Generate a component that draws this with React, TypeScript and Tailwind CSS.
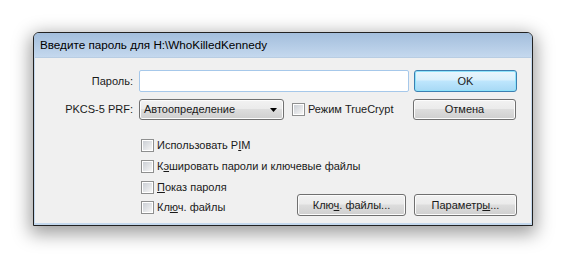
import React from "react";

function Check({ children }: { children: React.ReactNode }) {
  return (
    <div className="flex items-center">
      <div className="w-[13px] h-[13px] border border-[#8e8f8f] bg-white p-[1px] shrink-0">
        <div className="w-full h-full bg-gradient-to-br from-[#cbcfd5] to-[#f6f6f6]" />
      </div>
      <span className="ml-[3px] leading-[13px]">{children}</span>
    </div>
  );
}

function Btn({ children, w, primary }: { children: React.ReactNode; w: string; primary?: boolean }) {
  return (
    <div
      className={
        "h-[22px] rounded-[3px] border flex items-center justify-center " +
        w +
        (primary
          ? " border-[#3c7fb1] shadow-[inset_0_0_0_1px_#8fe3fb] bg-[linear-gradient(#eaf6fd_0%,#d9f0fc_45%,#bee6fd_50%,#a7d9f5_100%)]"
          : " border-[#707070] shadow-[inset_0_0_0_1px_#fcfcfc] bg-[linear-gradient(#f2f2f2_0%,#ebebeb_45%,#dddddd_50%,#cfcfcf_100%)]")
      }
    >
      <span className="leading-none">{children}</span>
    </div>
  );
}

export default function App() {
  return (
    <div
      className="w-[565px] h-[259px] bg-white pl-[33px] pt-[32px] text-[11px] text-[#1a1a1a]"
      style={{ fontFamily: '"Liberation Sans", "Noto Sans", sans-serif' }}
    >
      <div className="w-[500px] h-[194px] border border-[#222] rounded-t-[6px] shadow-[0_5px_18px_3px_rgba(0,0,0,0.38)] flex flex-col bg-[#c4d8ed] overflow-hidden">
        <div className="h-[24px] shrink-0 bg-[linear-gradient(#a3bedc,#c4d8ee)] flex items-center pl-[6px]">
          <span className="leading-none text-[11.7px] text-black">Введите пароль для H:\WhoKilledKennedy</span>
        </div>
        <div className="flex-1 mx-[1px] mb-[2px] bg-[#f0f0f0] border-t border-[#b8cde3] pt-[12px]">
          <div className="flex items-center h-[22px]">
            <div className="w-[98px] text-right">Пароль:</div>
            <div className="ml-[6px] w-[270px] h-[22px] bg-white border border-[#a6c8ea] rounded-[2px]" />
            <div className="ml-[5px]">
              <Btn w="w-[103px]" primary>
                OK
              </Btn>
            </div>
          </div>
          <div className="flex items-center h-[21px] mt-[7px]">
            <div className="w-[98px] text-right">PKCS-5 PRF:</div>
            <div className="ml-[6px] w-[145px] h-[21px] border border-[#707070] rounded-[3px] bg-[linear-gradient(#f2f2f2_0%,#ebebeb_45%,#dddddd_50%,#cfcfcf_100%)] shadow-[inset_0_0_0_1px_#fcfcfc] flex items-center pl-[4px] pr-[5px]">
              <span className="flex-1 leading-none">Автоопределение</span>
              <svg width="8" height="4" viewBox="0 0 8 4">
                <path d="M0 0H7L3.5 4Z" fill="#000" />
              </svg>
            </div>
            <div className="ml-[8px] w-[116px]">
              <Check>Режим TrueCrypt</Check>
            </div>
            <div className="ml-[5px] h-[21px]">
              <div className="h-[21px] w-[103px] rounded-[3px] border border-[#707070] shadow-[inset_0_0_0_1px_#fcfcfc] bg-[linear-gradient(#f2f2f2_0%,#ebebeb_45%,#dddddd_50%,#cfcfcf_100%)] flex items-center justify-center">
                <span className="leading-none">Отмена</span>
              </div>
            </div>
          </div>
          <div className="ml-[106px] mt-[15px] flex flex-col">
            <div className="h-[21px] pt-[4px]">
              <Check>
                Использовать P<span className="underline">I</span>M
              </Check>
            </div>
            <div className="h-[21px] pt-[4px]">
              <Check>
                К<span className="underline">э</span>шировать пароли и ключевые файлы
              </Check>
            </div>
            <div className="h-[17px] pt-[4px]">
              <Check>
                <span className="underline">П</span>оказ пароля
              </Check>
            </div>
            <div className="flex items-start h-[22px]">
              <div className="mt-[7px] w-[156px]">
                <Check>
                  Кл<span className="underline">ю</span>ч. файлы
                </Check>
              </div>
              <Btn w="w-[109px]">
                Клю<span className="underline">ч</span>. файлы...
              </Btn>
              <div className="ml-[8px]">
                <Btn w="w-[103px]">
                  Параметр<span className="underline">ы</span>...
                </Btn>
              </div>
            </div>
          </div>
        </div>
      </div>
    </div>
  );
}
